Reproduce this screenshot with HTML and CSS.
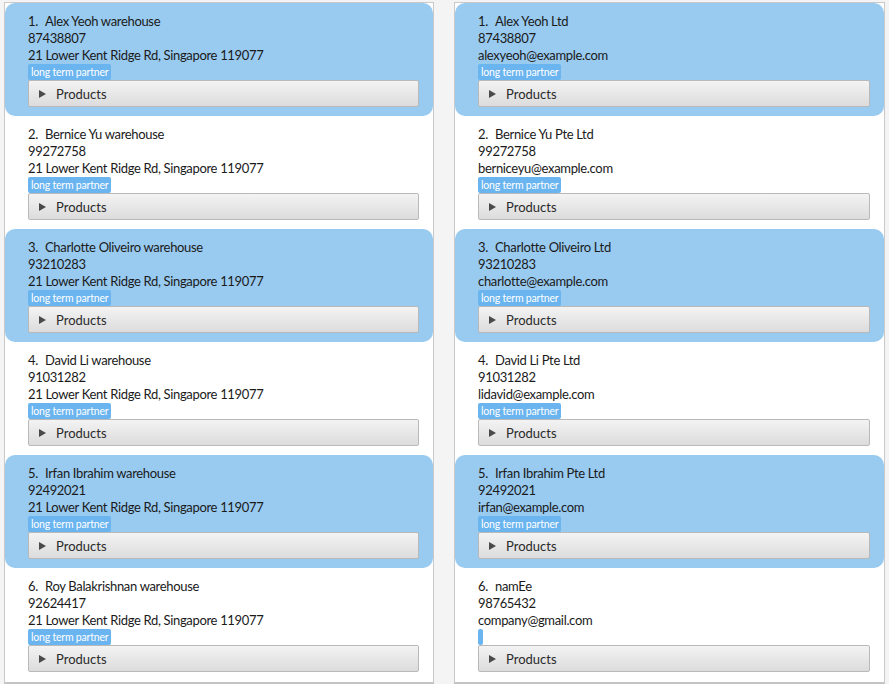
FILE: index.html
```html
<!DOCTYPE html>
<html>
<head>
<meta charset="utf-8">
<link rel="stylesheet" href="styles.css">
</head>
<body>
<div class="page">
  <div class="panel">
    <div class="cell odd">
      <div class="name"><span class="idx">1.</span><span>Alex Yeoh warehouse</span></div>
      <div class="line">87438807</div>
      <div class="line">21 Lower Kent Ridge Rd, Singapore 119077</div>
      <div class="tags"><span class="tag">long term partner</span></div>
      <div class="products"><span class="tri"></span>Products</div>
    </div>
    <div class="cell">
      <div class="name"><span class="idx">2.</span><span>Bernice Yu warehouse</span></div>
      <div class="line">99272758</div>
      <div class="line">21 Lower Kent Ridge Rd, Singapore 119077</div>
      <div class="tags"><span class="tag">long term partner</span></div>
      <div class="products"><span class="tri"></span>Products</div>
    </div>
    <div class="cell odd">
      <div class="name"><span class="idx">3.</span><span>Charlotte Oliveiro warehouse</span></div>
      <div class="line">93210283</div>
      <div class="line">21 Lower Kent Ridge Rd, Singapore 119077</div>
      <div class="tags"><span class="tag">long term partner</span></div>
      <div class="products"><span class="tri"></span>Products</div>
    </div>
    <div class="cell">
      <div class="name"><span class="idx">4.</span><span>David Li warehouse</span></div>
      <div class="line">91031282</div>
      <div class="line">21 Lower Kent Ridge Rd, Singapore 119077</div>
      <div class="tags"><span class="tag">long term partner</span></div>
      <div class="products"><span class="tri"></span>Products</div>
    </div>
    <div class="cell odd">
      <div class="name"><span class="idx">5.</span><span>Irfan Ibrahim warehouse</span></div>
      <div class="line">92492021</div>
      <div class="line">21 Lower Kent Ridge Rd, Singapore 119077</div>
      <div class="tags"><span class="tag">long term partner</span></div>
      <div class="products"><span class="tri"></span>Products</div>
    </div>
    <div class="cell">
      <div class="name"><span class="idx">6.</span><span>Roy Balakrishnan warehouse</span></div>
      <div class="line">92624417</div>
      <div class="line">21 Lower Kent Ridge Rd, Singapore 119077</div>
      <div class="tags"><span class="tag">long term partner</span></div>
      <div class="products"><span class="tri"></span>Products</div>
    </div>
    <div class="hbar"></div>
  </div>
  <div class="panel">
    <div class="cell odd">
      <div class="name"><span class="idx">1.</span><span>Alex Yeoh Ltd</span></div>
      <div class="line">87438807</div>
      <div class="line">alexyeoh@example.com</div>
      <div class="tags"><span class="tag">long term partner</span></div>
      <div class="products"><span class="tri"></span>Products</div>
    </div>
    <div class="cell">
      <div class="name"><span class="idx">2.</span><span>Bernice Yu Pte Ltd</span></div>
      <div class="line">99272758</div>
      <div class="line">berniceyu@example.com</div>
      <div class="tags"><span class="tag">long term partner</span></div>
      <div class="products"><span class="tri"></span>Products</div>
    </div>
    <div class="cell odd">
      <div class="name"><span class="idx">3.</span><span>Charlotte Oliveiro Ltd</span></div>
      <div class="line">93210283</div>
      <div class="line">charlotte@example.com</div>
      <div class="tags"><span class="tag">long term partner</span></div>
      <div class="products"><span class="tri"></span>Products</div>
    </div>
    <div class="cell">
      <div class="name"><span class="idx">4.</span><span>David Li Pte Ltd</span></div>
      <div class="line">91031282</div>
      <div class="line">lidavid@example.com</div>
      <div class="tags"><span class="tag">long term partner</span></div>
      <div class="products"><span class="tri"></span>Products</div>
    </div>
    <div class="cell odd">
      <div class="name"><span class="idx">5.</span><span>Irfan Ibrahim Pte Ltd</span></div>
      <div class="line">92492021</div>
      <div class="line">irfan@example.com</div>
      <div class="tags"><span class="tag">long term partner</span></div>
      <div class="products"><span class="tri"></span>Products</div>
    </div>
    <div class="cell">
      <div class="name"><span class="idx">6.</span><span>namEe</span></div>
      <div class="line">98765432</div>
      <div class="line">company@gmail.com</div>
      <div class="tags"><span class="tag empty"></span></div>
      <div class="products"><span class="tri"></span>Products</div>
    </div>
    <div class="hbar"></div>
  </div>
</div>
</body>
</html>
```

FILE: styles.css
```css
html, body {
  margin: 0;
  padding: 0;
  background: #f4f4f4;
  overflow: hidden;
}
.page {
  display: grid;
  grid-template-columns: 430px 431px;
  column-gap: 20px;
  padding: 2px 0 0 4px;
  height: 682px;
  font-family: Lato, Roboto, sans-serif;
  font-size: 13px;
  letter-spacing: -0.33px;
  color: #1a1a1a;
}
.panel {
  background: #ffffff;
  border: 1px solid #c9c9c9;
  border-bottom: none;
  display: flex;
  flex-direction: column;
  overflow: hidden;
  height: 682px;
}
.cell {
  height: 113px;
  box-sizing: border-box;
  padding: 10px 14px 9px 23px;
  display: flex;
  flex-direction: column;
  flex: none;
}
.cell.odd {
  background: #99caf0;
  border-radius: 10px;
}
.name, .line {
  height: 17px;
  line-height: 17px;
  white-space: nowrap;
}
.idx {
  display: inline-block;
  width: 17px;
}
.tags {
  height: 16px;
  display: flex;
}
.tag {
  background: #6ab4ef;
  color: #ffffff;
  font-size: 10.5px;
  letter-spacing: -0.2px;
  line-height: 16px;
  padding: 0 3px;
  border-radius: 2px;
}
.tag.empty {
  width: 5px;
  padding: 0;
  border-radius: 2px;
}
.products {
  height: 27px;
  box-sizing: border-box;
  border: 1px solid #b9b9b9;
  border-radius: 2px;
  background: linear-gradient(#f3f3f3, #dcdcdc);
  display: flex;
  align-items: center;
  padding-left: 10px;
  color: #2a2a2a;
  letter-spacing: 0;
}
.tri {
  width: 0;
  height: 0;
  border-top: 4.5px solid transparent;
  border-bottom: 4.5px solid transparent;
  border-left: 7px solid #4a4a4a;
  margin-right: 10px;
}
.hbar {
  margin-top: auto;
  height: 3px;
  background: #c4c4c4;
  flex: none;
}
```
